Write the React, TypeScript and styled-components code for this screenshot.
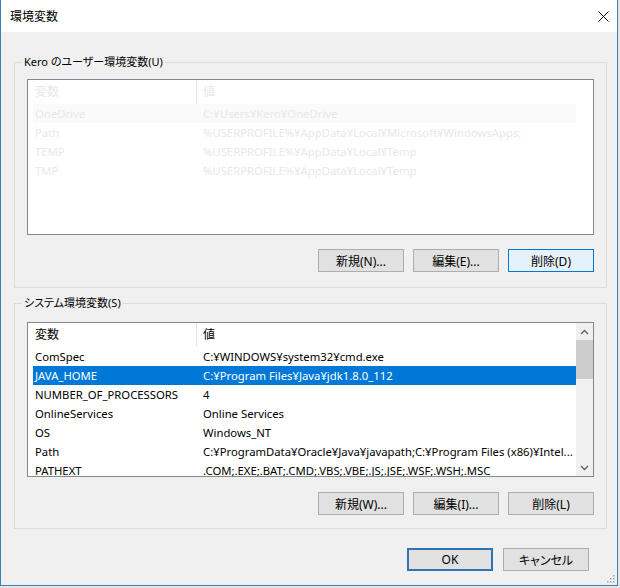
import React from 'react'
import styled, { createGlobalStyle } from 'styled-components'

const GlobalStyle = createGlobalStyle`
  html, body {
    margin: 0;
    padding: 0;
    width: 620px;
    height: 588px;
    overflow: hidden;
    background: #e6e6e6;
  }
  body {
    font-family: "Noto Sans", "Noto Sans CJK JP", sans-serif;
    font-size: 12px;
    font-feature-settings: "palt";
    color: #000;
  }
`

const uiFont = `"Noto Sans", "Noto Sans CJK JP", sans-serif`

const Window = styled.div`
  position: relative;
  width: 616px;
  height: 585px;
  border: 1px solid #3c7fb1;
  border-top: none;
  background: #f0f0f0;
  display: flex;
  flex-direction: column;
  font-family: ${uiFont};
`

const TitleBar = styled.div`
  height: 32px;
  flex: none;
  background: #fff;
  display: flex;
  align-items: center;
  justify-content: space-between;
  padding: 0 8px 0 9px;
`

const Title = styled.span`
  font-size: 12px;
  line-height: 16px;
  margin-top: 1px;
  font-feature-settings: normal;
`

const CloseButton = styled.div`
  width: 12px;
  height: 12px;
  display: flex;
  align-items: center;
  justify-content: center;
`

const Group = styled.div<{ $top: number; $padTop: number; $padBottom: number }>`
  position: relative;
  margin: ${p => p.$top}px 10px 0 13px;
  border: 1px solid #dcdcdc;
  padding: ${p => p.$padTop}px 12px ${p => p.$padBottom}px 12px;
  display: flex;
  flex-direction: column;
`

const Legend = styled.span`
  position: absolute;
  top: -9px;
  left: 7px;
  padding: 0 2px;
  background: #f0f0f0;
  font-size: 11px;
  line-height: 16px;
  white-space: nowrap;
`

const ListBox = styled.div<{ $height: number }>`
  height: ${p => p.$height}px;
  border: 1px solid #828790;
  background: #fff;
  display: flex;
  box-sizing: border-box;
  overflow: hidden;
`

const ListBody = styled.div<{ $faded?: boolean }>`
  flex: 1;
  padding-left: 5px;
  overflow: hidden;
  font-size: 11.3px;
  color: ${p => (p.$faded ? '#e8e8e8' : '#000')};
`

const HeaderRow = styled.div`
  display: grid;
  grid-template-columns: 164px 1fr;
  height: 24px;
  line-height: 24px;
  font-size: 12px;
`

const HeaderCell = styled.div<{ $divider?: boolean }>`
  padding-left: ${p => (p.$divider ? '2px' : '6px')};
  border-right: ${p => (p.$divider ? '1px solid #e5e5e5' : 'none')};
  white-space: nowrap;
`

const Row = styled.div<{ $selected?: boolean; $hover?: boolean }>`
  display: grid;
  grid-template-columns: 164px 1fr;
  height: 19px;
  line-height: 19px;
  background: ${p => (p.$selected ? '#0078d7' : p.$hover ? '#fafafa' : 'transparent')};
  color: ${p => (p.$selected ? '#fff' : 'inherit')};
`

const Cell = styled.div<{ $first?: boolean }>`
  padding-left: ${p => (p.$first ? '2px' : '6px')};
  white-space: nowrap;
  overflow: hidden;
`

const ScrollTrack = styled.div<{ $visible: boolean }>`
  width: 17px;
  flex: none;
  background: ${p => (p.$visible ? '#f0f0f0' : 'transparent')};
  display: flex;
  flex-direction: column;
  align-items: center;
`

const ScrollArrow = styled.div`
  height: 17px;
  width: 17px;
  display: flex;
  align-items: center;
  justify-content: center;
`

const ScrollThumb = styled.div`
  width: 17px;
  height: 39px;
  background: #cdcdcd;
`

const ScrollGap = styled.div`
  flex: 1;
`

const ButtonRow = styled.div<{ $top: number; $right?: number }>`
  display: flex;
  justify-content: flex-end;
  gap: 9px;
  margin-top: ${p => p.$top}px;
  padding-right: ${p => p.$right ?? 0}px;
`

const Button = styled.button<{ $focused?: boolean; $default?: boolean }>`
  width: 86px;
  height: 23px;
  box-sizing: border-box;
  padding: 0;
  font-family: ${uiFont};
  font-size: 12px;
  font-feature-settings: "palt";
  color: #000;
  background: ${p => (p.$focused ? '#e5f1fb' : '#e1e1e1')};
  border: ${p =>
    p.$default ? '2px solid #2f75b5' : p.$focused ? '1px solid #0078d7' : '1px solid #adadad'};
`

const Footer = styled(ButtonRow)`
  gap: 10px;
`

const Grip = styled.svg`
  position: absolute;
  right: 2px;
  bottom: 2px;
`

type EnvVar = { name: string; value: string }

const userVars: EnvVar[] = [
  { name: 'OneDrive', value: 'C:¥Users¥Kero¥OneDrive' },
  { name: 'Path', value: '%USERPROFILE%¥AppData¥Local¥Microsoft¥WindowsApps;' },
  { name: 'TEMP', value: '%USERPROFILE%¥AppData¥Local¥Temp' },
  { name: 'TMP', value: '%USERPROFILE%¥AppData¥Local¥Temp' },
]

const systemVars: EnvVar[] = [
  { name: 'ComSpec', value: 'C:¥WINDOWS¥system32¥cmd.exe' },
  { name: 'JAVA_HOME', value: 'C:¥Program Files¥Java¥jdk1.8.0_112' },
  { name: 'NUMBER_OF_PROCESSORS', value: '4' },
  { name: 'OnlineServices', value: 'Online Services' },
  { name: 'OS', value: 'Windows_NT' },
  { name: 'Path', value: 'C:¥ProgramData¥Oracle¥Java¥javapath;C:¥Program Files (x86)¥Intel...' },
  { name: 'PATHEXT', value: '.COM;.EXE;.BAT;.CMD;.VBS;.VBE;.JS;.JSE;.WSF;.WSH;.MSC' },
]

const Chevron = ({ up }: { up?: boolean }) => (
  <svg width="9" height="6" viewBox="0 0 9 6">
    <path
      d={up ? 'M1 5 L4.5 1.5 L8 5' : 'M1 1 L4.5 4.5 L8 1'}
      fill="none"
      stroke="#606060"
      strokeWidth="1.3"
    />
  </svg>
)

const VarList = ({
  vars,
  height,
  faded,
  selected,
  scrollbar,
}: {
  vars: EnvVar[]
  height: number
  faded?: boolean
  selected?: number
  scrollbar?: boolean
}) => (
  <ListBox $height={height}>
    <ListBody $faded={faded}>
      <HeaderRow>
        <HeaderCell $divider>変数</HeaderCell>
        <HeaderCell>値</HeaderCell>
      </HeaderRow>
      {vars.map((v, i) => (
        <Row key={v.name + i} $selected={selected === i} $hover={faded && i === 0}>
          <Cell $first>{v.name}</Cell>
          <Cell>{v.value}</Cell>
        </Row>
      ))}
    </ListBody>
    <ScrollTrack $visible={!!scrollbar}>
      {scrollbar && (
        <>
          <ScrollArrow>
            <Chevron up />
          </ScrollArrow>
          <ScrollThumb />
          <ScrollGap />
          <ScrollArrow>
            <Chevron />
          </ScrollArrow>
        </>
      )}
    </ScrollTrack>
  </ListBox>
)

export default function App() {
  return (
    <>
      <GlobalStyle />
      <Window>
        <TitleBar>
          <Title>環境変数</Title>
          <CloseButton>
            <svg width="11" height="11" viewBox="0 0 11 11">
              <path d="M0.5 0.5 L10.5 10.5 M10.5 0.5 L0.5 10.5" stroke="#000" strokeWidth="1" />
            </svg>
          </CloseButton>
        </TitleBar>

        <Group $top={30} $padTop={16} $padBottom={15}>
          <Legend>Kero のユーザー環境変数(U)</Legend>
          <VarList vars={userVars} height={156} faded />
          <ButtonRow $top={14}>
            <Button>新規(N)...</Button>
            <Button>編集(E)...</Button>
            <Button $focused>削除(D)</Button>
          </ButtonRow>
        </Group>

        <Group $top={15} $padTop={18} $padBottom={13}>
          <Legend>システム環境変数(S)</Legend>
          <VarList vars={systemVars} height={155} selected={1} scrollbar />
          <ButtonRow $top={15}>
            <Button>新規(W)...</Button>
            <Button>編集(I)...</Button>
            <Button>削除(L)</Button>
          </ButtonRow>
        </Group>

        <Footer $top={19} $right={28}>
          <Button $default>OK</Button>
          <Button>キャンセル</Button>
        </Footer>

        <Grip width="10" height="10" viewBox="0 0 10 10">
          {[
            [8, 2],
            [5, 5],
            [8, 5],
            [2, 8],
            [5, 8],
            [8, 8],
          ].map(([x, y]) => (
            <rect key={`${x}-${y}`} x={x} y={y} width="1.5" height="1.5" fill="#a0a0a0" />
          ))}
        </Grip>
      </Window>
    </>
  )
}
